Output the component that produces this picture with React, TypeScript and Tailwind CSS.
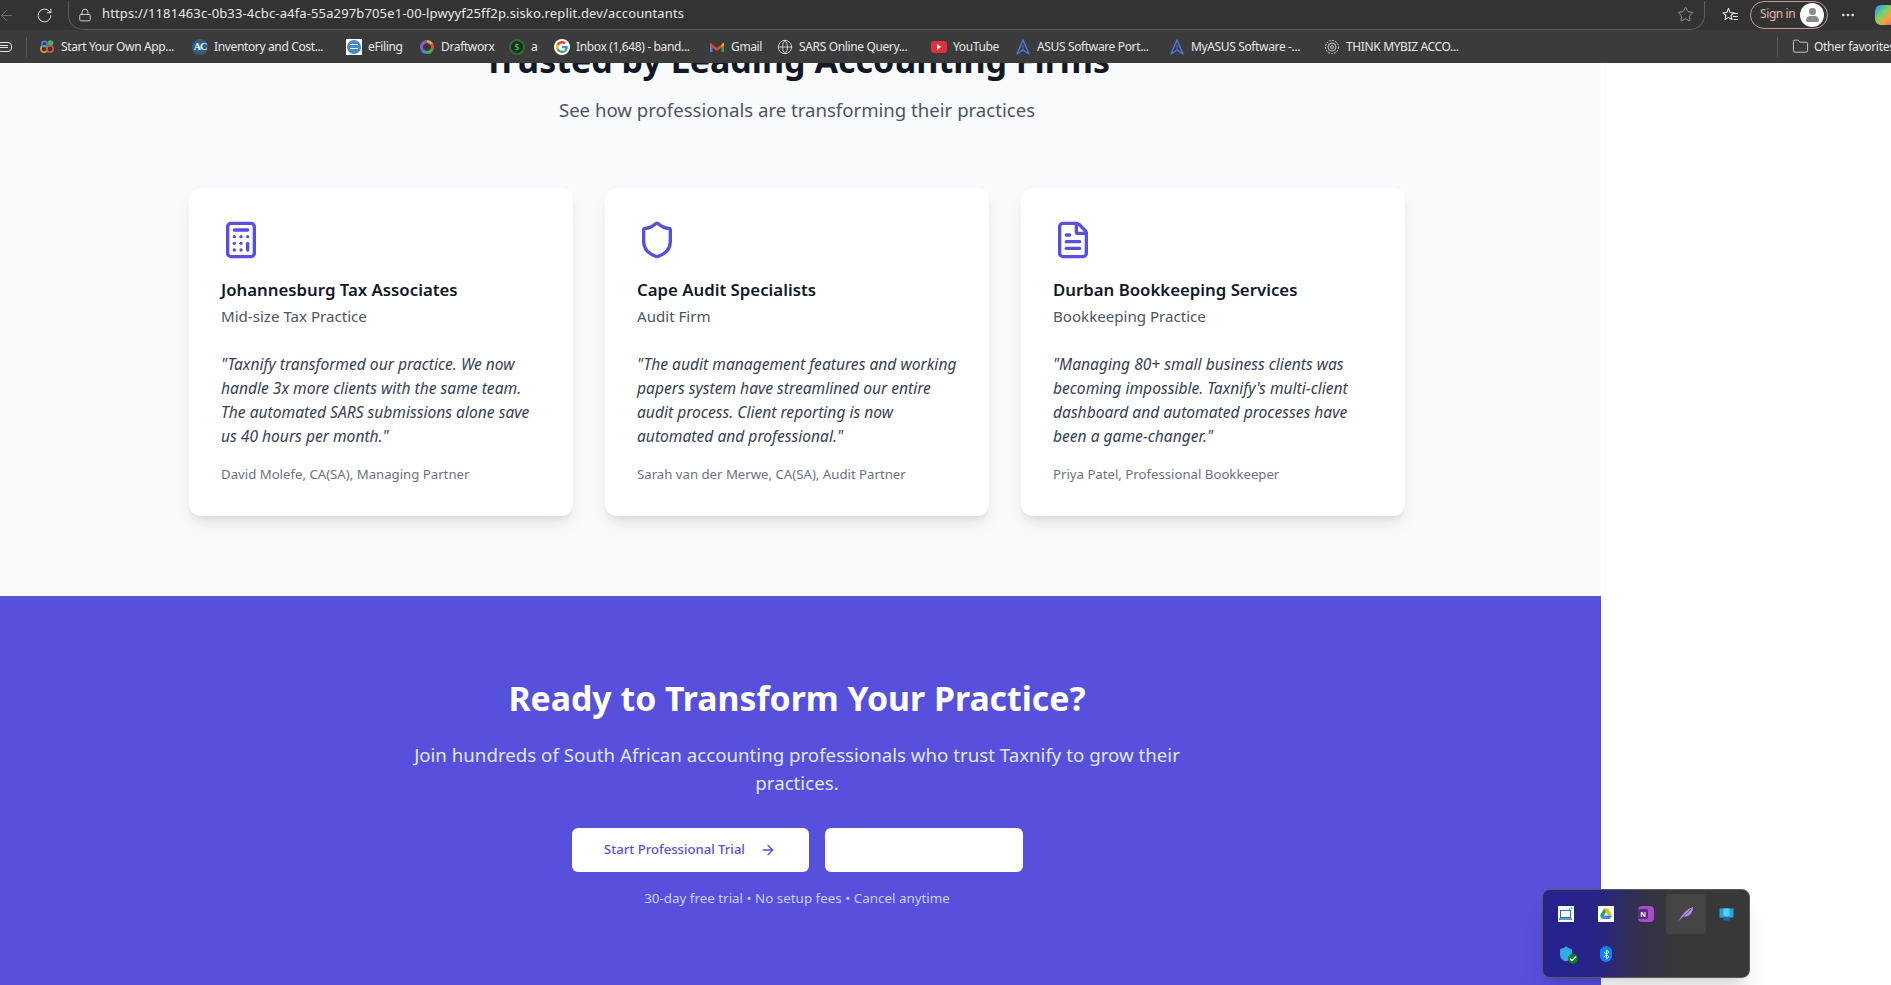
import type { ReactNode } from "react";
import { Calculator, Shield, FileText, ArrowRight, RotateCw, ArrowLeft, Lock, Star, Globe, Folder, MoreHorizontal, Bluetooth, Check } from "lucide-react";

const F = "font-['Noto_Sans','Open_Sans',sans-serif]";

const StartIcon = () => (
  <svg width="16" height="16" viewBox="0 0 16 16" className="shrink-0">
    <circle cx="5" cy="10" r="3.200" fill="none" stroke="#f0a030" strokeWidth="1.600" />
    <circle cx="11" cy="10" r="3.200" fill="none" stroke="#e0503a" strokeWidth="1.600" />
    <circle cx="5.500" cy="5" r="2.600" fill="none" stroke="#3c8fd8" strokeWidth="1.600" />
    <circle cx="11.500" cy="4" r="2.800" fill="#4caf50" />
  </svg>
);
const AcIcon = () => (
  <span className="flex h-4 w-4 shrink-0 items-center justify-center rounded-full bg-[#2f5f84] font-['Liberation_Serif',serif] text-[10px] font-bold tracking-[-1px] text-white">AC</span>
);
const EfilingIcon = () => (
  <span className="flex h-4 w-4 shrink-0 items-center justify-center bg-white">
    <span className="flex h-3.5 w-3.5 items-center justify-center rounded-full bg-[#4a86c8]"><span className="h-[5px] w-2 border-y border-white" /></span>
  </span>
);
const DraftIcon = () => (
  <svg width="16" height="16" viewBox="0 0 16 16" className="shrink-0" fill="none" strokeWidth="3">
    <path d="M8 2.500a5.500 5.500 0 0 1 4.800 2.800" stroke="#e8a33a" />
    <path d="M12.800 5.300a5.500 5.500 0 0 1 0 5.400" stroke="#d8503a" />
    <path d="M12.800 10.700A5.500 5.500 0 0 1 8 13.500" stroke="#4caf50" />
    <path d="M8 13.500a5.500 5.500 0 0 1-4.800-2.800" stroke="#3c8fd8" />
    <path d="M3.200 10.700a5.500 5.500 0 0 1 0-5.400A5.500 5.500 0 0 1 8 2.500" stroke="#8a5cc8" />
  </svg>
);
const MoneyIcon = () => (
  <span className="flex h-4 w-4 shrink-0 items-center justify-center rounded-full border-2 border-[#2c6e2c] bg-[#16301a] text-[8px] text-[#6fcf6f]">$</span>
);
const GoogleIcon = () => (
  <span className="flex h-4 w-4 shrink-0 items-center justify-center rounded-full bg-white">
    <svg width="12" height="12" viewBox="0 0 48 48">
      <path fill="#EA4335" d="M24 9.500c3.500 0 6.700 1.300 9.100 3.500l6.800-6.800C35.800 2.400 30.300 0 24 0 14.600 0 6.500 5.400 2.600 13.200l7.900 6.100C12.400 13.700 17.700 9.500 24 9.500z" />
      <path fill="#4285F4" d="M47 24.500c0-1.600-.1-3.100-.4-4.500H24v9h13c-.6 3-2.200 5.500-4.700 7.200l7.300 5.700C44 38 47 31.800 47 24.500z" />
      <path fill="#FBBC05" d="M10.500 28.700c-.5-1.400-.8-3-.8-4.700s.3-3.300.8-4.700l-7.900-6.100C.9 16.500 0 20.100 0 24s.9 7.500 2.600 10.800l7.900-6.100z" />
      <path fill="#34A853" d="M24 48c6.500 0 11.900-2.100 15.900-5.800l-7.300-5.700c-2.200 1.500-5 2.300-8.600 2.300-6.300 0-11.600-4.200-13.500-9.900l-7.900 6.100C6.500 42.600 14.600 48 24 48z" />
    </svg>
  </span>
);
const GmailIcon = () => (
  <svg width="16" height="16" viewBox="0 0 16 16" className="shrink-0">
    <path d="M1 4v9h2.500V7.500z" fill="#4285f4" />
    <path d="M15 4v9h-2.500V7.500z" fill="#34a853" />
    <path d="M1 3.500 8 9l7-5.500v3L8 12 1 6.500z" fill="#ea4335" />
    <path d="M12.500 5.500 15 3.500v3l-2.500 1.500z" fill="#fbbc05" />
  </svg>
);
const YoutubeIcon = () => (
  <span className="flex h-3 w-4 shrink-0 items-center justify-center rounded-[3px] bg-[#e0303a]">
    <span className="h-0 w-0 border-y-[3px] border-l-[4px] border-y-transparent border-l-white" />
  </span>
);
const AsusIcon = () => (
  <svg width="16" height="16" viewBox="0 0 16 16" className="shrink-0" fill="none" stroke="#4a78e0" strokeWidth="1.400" strokeLinejoin="round">
    <path d="M8 1 2 15l6-4 6 4z" />
    <path d="M8 5.500v5.500" strokeWidth="0.800" />
  </svg>
);
const ThinkIcon = () => (
  <svg width="16" height="16" viewBox="0 0 16 16" className="shrink-0" fill="none" stroke="#c8c8c8" strokeWidth="1">
    <circle cx="8" cy="8" r="6.500" strokeDasharray="2 1" />
    <circle cx="8" cy="8" r="4" />
    <circle cx="8" cy="8" r="1.500" />
  </svg>
);

const bookmarks: { icon: ReactNode; label: string; w: string }[] = [
  { icon: <StartIcon />, label: "Start Your Own App...", w: "w-[153px]" },
  { icon: <AcIcon />, label: "Inventory and Cost...", w: "w-[154px]" },
  { icon: <EfilingIcon />, label: "eFiling", w: "w-[73px]" },
  { icon: <DraftIcon />, label: "Draftworx", w: "w-[90px]" },
  { icon: <MoneyIcon />, label: "a", w: "w-[45px]" },
  { icon: <GoogleIcon />, label: "Inbox (1,648) - band...", w: "w-[155px]" },
  { icon: <GmailIcon />, label: "Gmail", w: "w-[68px]" },
  { icon: <Globe size={16} strokeWidth={1.3} className="shrink-0 text-[#e0e0e0]" />, label: "SARS Online Query...", w: "w-[154px]" },
  { icon: <YoutubeIcon />, label: "YouTube", w: "w-[84px]" },
  { icon: <AsusIcon />, label: "ASUS Software Port...", w: "w-[154px]" },
  { icon: <AsusIcon />, label: "MyASUS Software -...", w: "w-[155px]" },
  { icon: <ThinkIcon />, label: "THINK MYBIZ ACCO...", w: "w-[150px]" },
];

const cards = [
  {
    Icon: Calculator,
    title: "Johannesburg Tax Associates",
    sub: "Mid-size Tax Practice",
    quote: '"Taxnify transformed our practice. We now handle 3x more clients with the same team. The automated SARS submissions alone save us 40 hours per month."',
    author: "David Molefe, CA(SA), Managing Partner",
  },
  {
    Icon: Shield,
    title: "Cape Audit Specialists",
    sub: "Audit Firm",
    quote: '"The audit management features and working papers system have streamlined our entire audit process. Client reporting is now automated and professional."',
    author: "Sarah van der Merwe, CA(SA), Audit Partner",
  },
  {
    Icon: FileText,
    title: "Durban Bookkeeping Services",
    sub: "Bookkeeping Practice",
    quote: "\"Managing 80+ small business clients was becoming impossible. Taxnify's multi-client dashboard and automated processes have been a game-changer.\"",
    author: "Priya Patel, Professional Bookkeeper",
  },
];

function Tray() {
  const cell = "flex h-10 w-10 items-center justify-center rounded";
  return (
    <div className="absolute left-[1542px] top-[889px] h-[89px] w-[208px] rounded-lg border border-[#5a5a5e] bg-[linear-gradient(90deg,#25218f_0%,#282488_25%,#343148_48%,#383838_65%,#383838_100%)] px-[3px] pt-1 shadow-xl">
      <div className="flex">
        <div className={cell}>
          <svg width="16" height="16" viewBox="0 0 16 16">
            <rect width="16" height="16" fill="#fff" />
            <path d="M2.500 4.500h10v7h-10z" fill="none" stroke="#1272c4" strokeWidth="1.100" />
            <path d="M1 13h13" stroke="#1272c4" strokeWidth="1.400" />
            <path d="M13 1.500l1.500 1.500M11 2.500l1 1" stroke="#2fa8e8" strokeWidth="1.200" />
          </svg>
        </div>
        <div className={cell}>
          <svg width="16" height="16" viewBox="0 0 16 16">
            <rect width="16" height="16" fill="#fff" />
            <path d="M6 2.500h4l4 7h-4z" fill="#f5b400" />
            <path d="M6 2.500l-4 7 2 3.500 4-7z" fill="#1fa463" />
            <path d="M4 13h8l2-3.500H6z" fill="#4285f4" />
          </svg>
        </div>
        <div className={cell}>
          <span className="relative flex h-4 w-4 items-center justify-end rounded-sm bg-[#a64ec8]">
            <span className="absolute left-0 top-[3px] flex h-[10px] w-[10px] items-center justify-center rounded-[1px] bg-[#5c2a8a] text-[7px] font-bold leading-none text-white">N</span>
          </span>
        </div>
        <div className={`${cell} bg-[#454545]`}>
          <svg width="16" height="16" viewBox="0 0 16 16"><path d="M1 15C3 10 8 3 15 1c0 6-4 10-10 10z" fill="#b08ee0" /><path d="M1.500 15L13 3" stroke="#5b3d99" strokeWidth="0.800" /></svg>
        </div>
        <div className={cell}>
          <svg width="15" height="15" viewBox="0 0 15 15"><path d="M0.500 1.500h14v9h-14z" fill="#27a3e0" /><path d="M4.500 1.500h6v7l-3 1-3-1z" fill="#5ccdf5" /><path d="M4.500 10.500h6v3h-6z" fill="#0f6fc0" /></svg>
        </div>
      </div>
      <div className="flex">
        <div className={cell}>
          <span className="relative block h-4 w-4">
            <Shield size={16} fill="#33a8e6" stroke="#33a8e6" />
            <span className="absolute -bottom-0.5 -right-1 flex h-2.5 w-2.5 items-center justify-center rounded-full bg-[#0f7b2a]"><Check size={8} className="text-white" strokeWidth={4} /></span>
          </span>
        </div>
        <div className={cell}>
          <span className="flex h-4 w-3 items-center justify-center rounded-md bg-[#0a84ff]"><Bluetooth size={11} className="text-white" /></span>
        </div>
      </div>
    </div>
  );
}

export default function App() {
  return (
    <div className={`relative flex h-[985px] w-[1891px] flex-col overflow-hidden bg-white ${F}`}>
      <header className="h-[63px] shrink-0 overflow-hidden bg-[#3b3b3b] text-[#e6e6e6]">
        <div className="flex h-[30px] items-center bg-[#333333]">
          <ArrowLeft size={17} strokeWidth={1.4} className="ml-[-2px] shrink-0 text-[#6e6e6e]" />
          <RotateCw size={17} strokeWidth={1.4} className="ml-[21px] shrink-0 text-[#e0e0e0]" />
          <div className="ml-[15px] flex h-[29px] w-[1637px] shrink-0 items-center rounded-b-[15px] border border-t-0 border-[#5c5c5c] pl-[9px]">
            <Lock size={14} strokeWidth={1.5} className="shrink-0 text-[#e0e0e0]" />
            <span className="ml-[10px] mt-[-2px] whitespace-nowrap text-[13px] tracking-[0.14px] text-[#e8e8e8]">https://1181463c-0b33-4cbc-a4fa-55a297b705e1-00-lpwyyf25ff2p.sisko.replit.dev/accountants</span>
            <Star size={17} strokeWidth={1.2} className="ml-auto mr-[10px] shrink-0 text-[#a8a8a8]" />
          </div>
          <svg width="17" height="16" viewBox="0 0 17 16" fill="none" stroke="#e8e8e8" strokeWidth="1.100" className="ml-[17px] shrink-0">
            <path d="M6.500 1.500 8.200 5.500l3.800.4-2.900 2.600.8 4-3.400-2.100-3.400 2.100.8-4L1 5.900l3.800-.4z" strokeLinejoin="round" />
            <path d="M12 6.500h4M11 9.500h5M11.500 12.500h4.500" />
          </svg>
          <div className="ml-[11px] flex h-[28px] w-[78px] shrink-0 items-center rounded-full border border-[#c39c92] pl-[9px]">
            <span className="mt-[-2px] whitespace-nowrap text-[12px] tracking-[-0.4px] text-[#e3b5aa]">Sign in</span>
            <span className="relative ml-[5px] flex h-[24px] w-[24px] shrink-0 flex-col items-center justify-center gap-[1px] rounded-full bg-white">
              <span className="h-[7px] w-[7px] rounded-full bg-[#8a8a8a]" />
              <span className="h-[6px] w-[13px] rounded-t-[5px] rounded-b-[2px] bg-[#8a8a8a]" />
            </span>
          </div>
          <MoreHorizontal size={16} className="ml-[12px] shrink-0 text-[#e0e0e0]" />
          <span className="ml-[19px] h-5 w-5 shrink-0 rounded-md bg-[linear-gradient(135deg,#2f9be8_10%,#7dd06a_40%,#f2a33a_65%,#e85a8a)]" />
        </div>
        <div className="flex h-[33px] items-center">
          <span className="ml-[-3px] flex h-[10px] w-[15px] shrink-0 flex-col justify-center gap-[1px] rounded-sm border border-[#e0e0e0] pl-[2px]">
            <span className="h-px w-[8px] bg-[#e0e0e0]" />
            <span className="h-px w-[8px] bg-[#e0e0e0]" />
          </span>
          <span className="ml-[14px] mr-[12px] h-[20px] w-px shrink-0 bg-[#5a5a5a]" />
          <div className="flex min-w-0 flex-1 items-center">
            {bookmarks.map((b) => (
              <div key={b.label} className={`flex shrink-0 items-center gap-[6px] ${b.w}`}>
                {b.icon}
                <span className="whitespace-nowrap text-[12px] tracking-[-0.36px] text-[#e8e8e8]">{b.label}</span>
              </div>
            ))}
          </div>
          <div className="flex w-[114px] shrink-0 items-center">
            <span className="mr-[14px] h-[20px] w-px shrink-0 bg-[#5a5a5a]" />
            <Folder size={17} strokeWidth={1.2} className="shrink-0 text-[#e0e0e0]" />
            <span className="ml-[5px] whitespace-nowrap text-[12px] tracking-[-0.3px] text-[#e8e8e8]">Other favorites</span>
          </div>
        </div>
      </header>

      <main className="h-[922px] w-[1601px] overflow-hidden bg-[#f9fafb]">
        <section className="w-[1594px] pb-[80px]">
          <div className="mt-[-23px] text-center">
            <h2 className="text-[34px] font-bold leading-[40px] text-[#111827]">Trusted by Leading Accounting Firms</h2>
            <p className="mt-[16px] text-[18.6px] leading-[28px] text-[#4b5563]">See how professionals are transforming their practices</p>
          </div>
          <div className="mx-auto mt-[64px] grid w-[1216px] grid-cols-3 gap-8">
            {cards.map(({ Icon, title, sub, quote, author }) => (
              <div key={title} className="rounded-xl bg-white p-8 shadow-lg">
                <Icon size={40} className="text-[#5650dc]" />
                <h3 className="mt-[16px] text-[16.8px] font-semibold leading-[28px] text-[#111827]">{title}</h3>
                <p className="text-[15.100px] leading-[24px] text-[#4b5563]">{sub}</p>
                <p className="mt-[24px] text-[15.600px] italic leading-[24px] text-[#374151]">{quote}</p>
                <p className="mt-[16px] text-[13.200px] leading-[20px] text-[#6b7280]">{author}</p>
              </div>
            ))}
          </div>
        </section>
        <section className="h-[400px] w-full bg-[#5650dc] pt-[82px]">
          <div className="w-[1594px] text-center">
            <h2 className="text-[33.800px] font-bold leading-[40px] text-white">Ready to Transform Your Practice?</h2>
            <p className="mx-auto mt-[23px] w-[784px] text-[18.700px] leading-[28px] text-[#e0e7ff]">Join hundreds of South African accounting professionals who trust Taxnify to grow their practices.</p>
            <div className="mt-[31px] flex justify-center gap-4">
              <button className="flex h-[44px] w-[237px] items-center justify-center rounded-md bg-white text-[13.100px] font-medium text-[#5650dc]">
                Start Professional Trial
                <ArrowRight size={16} className="ml-[15px]" />
              </button>
              <button className="h-[44px] w-[198px] rounded-md bg-white" />
            </div>
            <p className="mt-[16px] text-[13.400px] leading-[20px] text-[#c7d2fe]">30-day free trial • No setup fees • Cancel anytime</p>
          </div>
        </section>
      </main>
      <Tray />
    </div>
  );
}
